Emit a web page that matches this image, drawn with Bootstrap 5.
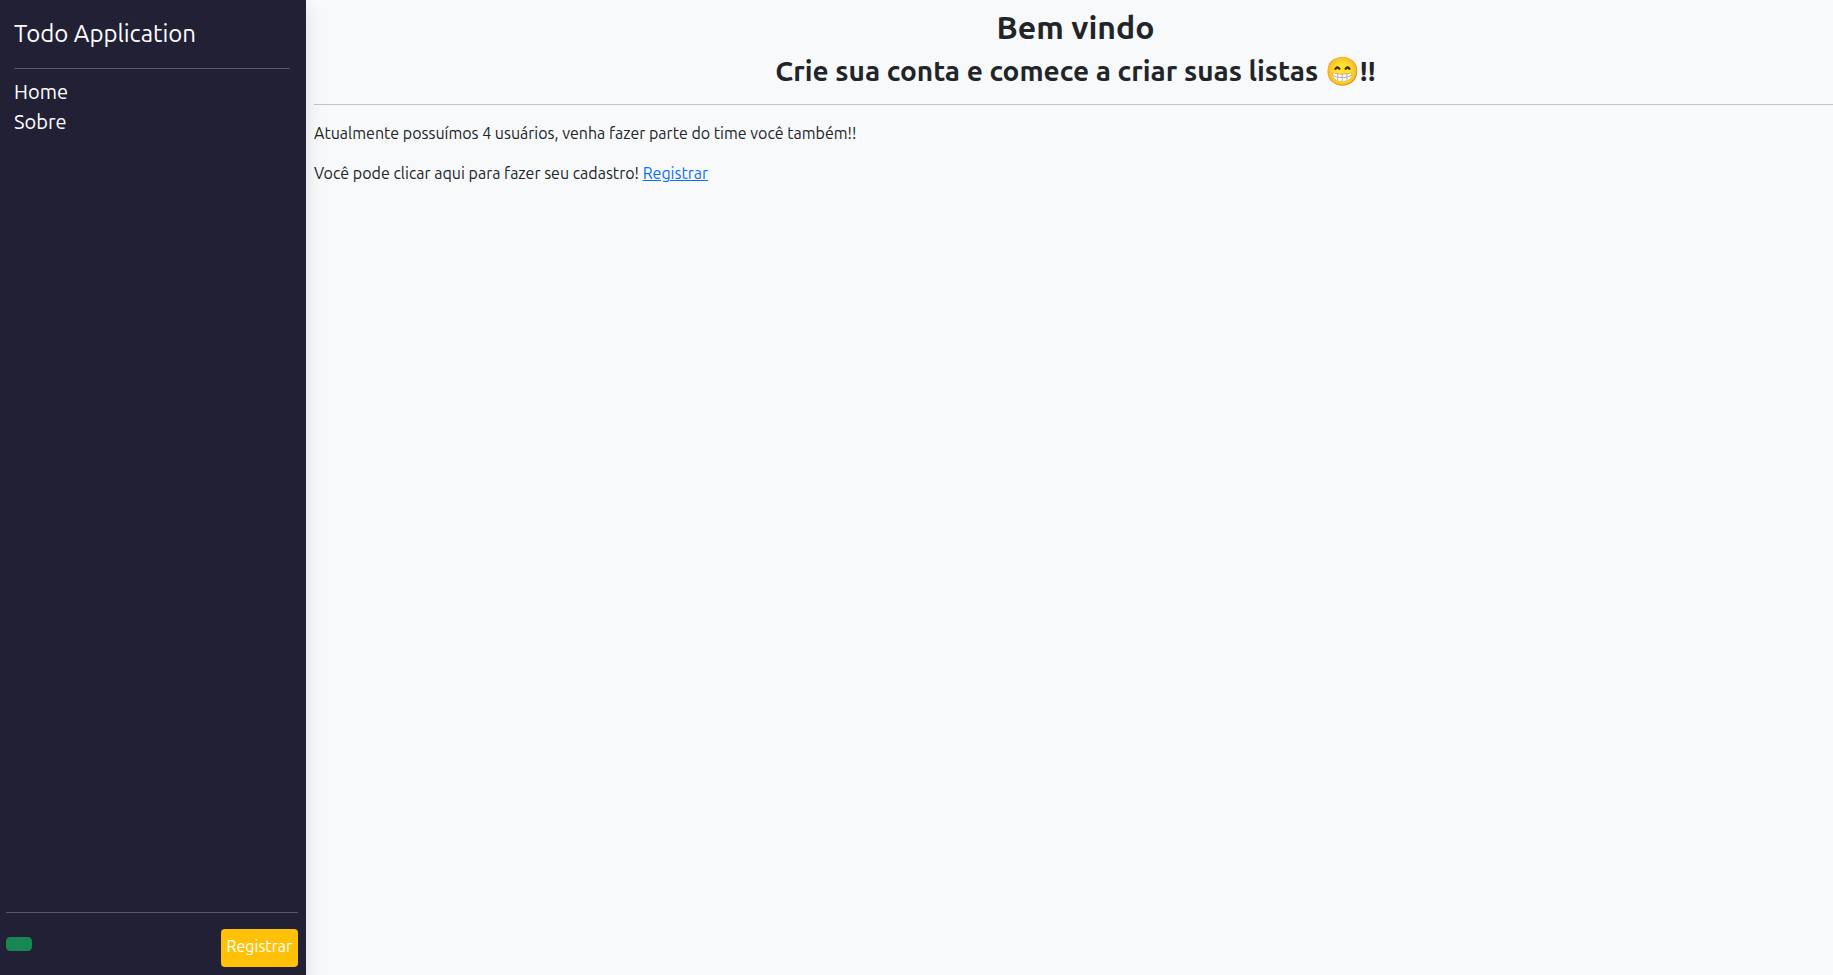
<!DOCTYPE html>
<html lang="pt-BR">
<head>
<meta charset="utf-8">
<meta name="viewport" content="width=device-width, initial-scale=1">
<title>Todo Application</title>
<link href="https://cdn.jsdelivr.net/npm/bootstrap@5.3.0/dist/css/bootstrap.min.css" rel="stylesheet">
<style>
  body { font-family: Ubuntu, Roboto, "Liberation Sans", sans-serif; }
  .sidebar { flex: 0 0 306px; background: #222035; }
  .sidebar-title { font-size: 24px; }
  .sidebar-top { padding: 16px 16px 0 14px; }
  .sidebar-links { font-size: 20px; margin-top: -8px; }
  .sidebar-bottom { padding: 0 8px 8px 6px; }
  .welcome-title { font-size: 32px; font-weight: 600; }
  .welcome-subtitle { font-size: 28px; font-weight: 600; }
  .btn-tag { border-radius: 4px; }
  .btn-register { padding: 4px 6px 8px; border: 0; height: 38px; }
</style>
</head>
<body class="bg-light">
<div class="d-flex min-vh-100">
  <aside class="sidebar d-flex flex-column text-white shadow">
    <div class="sidebar-top">
      <a href="#" class="sidebar-title d-block text-white text-decoration-none">Todo Application</a>
      <hr>
      <nav class="sidebar-links">
        <a href="#" class="d-block text-white text-decoration-none">Home</a>
        <a href="#" class="d-block text-white text-decoration-none">Sobre</a>
      </nav>
    </div>
    <div class="sidebar-bottom mt-auto">
      <hr>
      <div class="d-flex justify-content-between align-items-start">
        <button type="button" class="btn btn-success btn-tag mt-2" aria-label="Entrar"></button>
        <button type="button" class="btn btn-warning btn-tag btn-register text-white">Registrar</button>
      </div>
    </div>
  </aside>
  <main class="flex-grow-1 pt-2 ps-2">
    <div class="text-center ps-1">
      <h2 class="welcome-title">Bem vindo</h2>
      <h3 class="welcome-subtitle">Crie sua conta e comece a criar suas listas 😁!!</h3>
    </div>
    <hr>
    <p>Atualmente possuímos 4 usuários, venha fazer parte do time você também!!</p>
    <p>Você pode clicar aqui para fazer seu cadastro! <a href="#">Registrar</a></p>
  </main>
</div>
<script src="https://cdn.jsdelivr.net/npm/bootstrap@5.3.0/dist/js/bootstrap.bundle.min.js"></script>
</body>
</html>
